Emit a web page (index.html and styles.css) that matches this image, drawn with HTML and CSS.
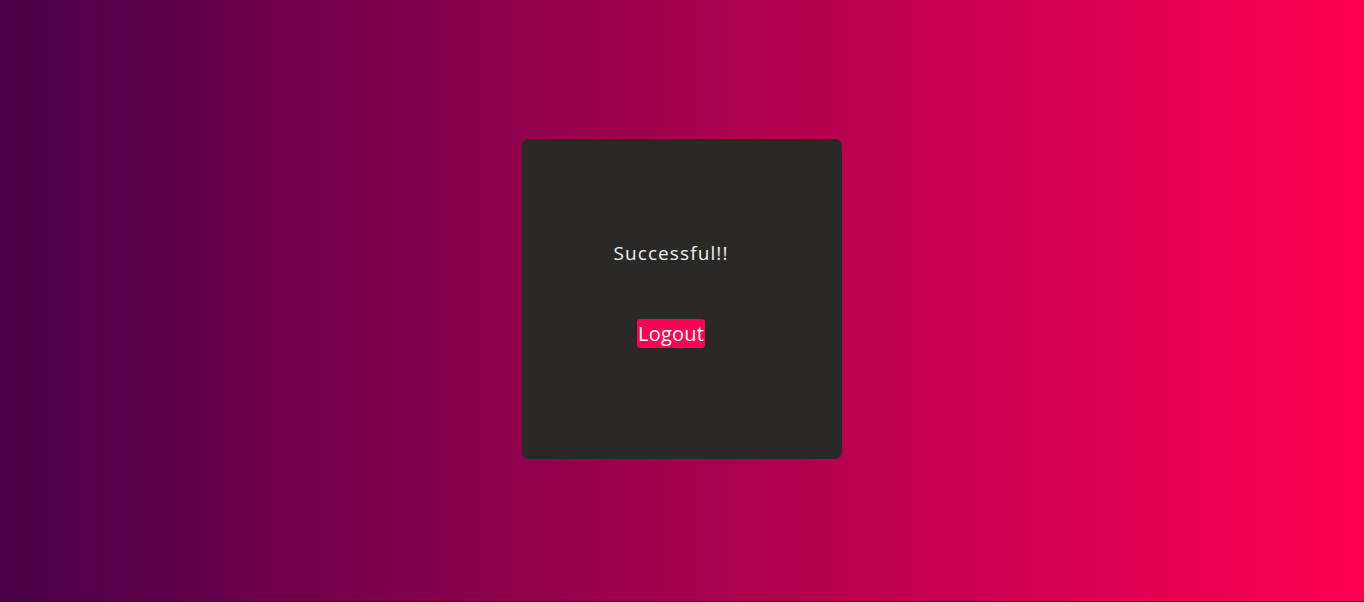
FILE: index.html
```html
<!DOCTYPE html>
<html>
<head>
<meta charset="utf-8">
<link rel="stylesheet" href="styles.css">
</head>
<body>
<div class="page">
  <div class="card">
    <p class="msg">Successful!!</p>
    <button class="logout">Logout</button>
  </div>
</div>
</body>
</html>
```
FILE: styles.css
```css
html, body {
  margin: 0;
  padding: 0;
  background: #2a1a28;
}
.page {
  height: 601px;
  box-sizing: border-box;
  padding-bottom: 3px;
  background: linear-gradient(to right, #4a0049, #ff0052);
  display: flex;
  align-items: center;
  justify-content: center;
  font-family: "Open Sans", "Lato", sans-serif;
}
.card {
  width: 320px;
  height: 320px;
  box-sizing: border-box;
  background: #2a2926;
  border-radius: 7px;
  display: flex;
  flex-direction: column;
  align-items: center;
  padding: 100px 22px 0 0;
}
.msg {
  margin: 0;
  color: #eef0f5;
  font-size: 19px;
  line-height: 28px;
  letter-spacing: 1.1px;
}
.logout {
  margin-top: 52px;
  background: #ff0052;
  color: #ffffff;
  border: none;
  border-radius: 3px;
  padding: 0 1px;
  height: 29px;
  font-family: "Open Sans", "Lato", sans-serif;
  font-size: 20px;
  line-height: 29px;
  letter-spacing: 0.2px;
}
```
